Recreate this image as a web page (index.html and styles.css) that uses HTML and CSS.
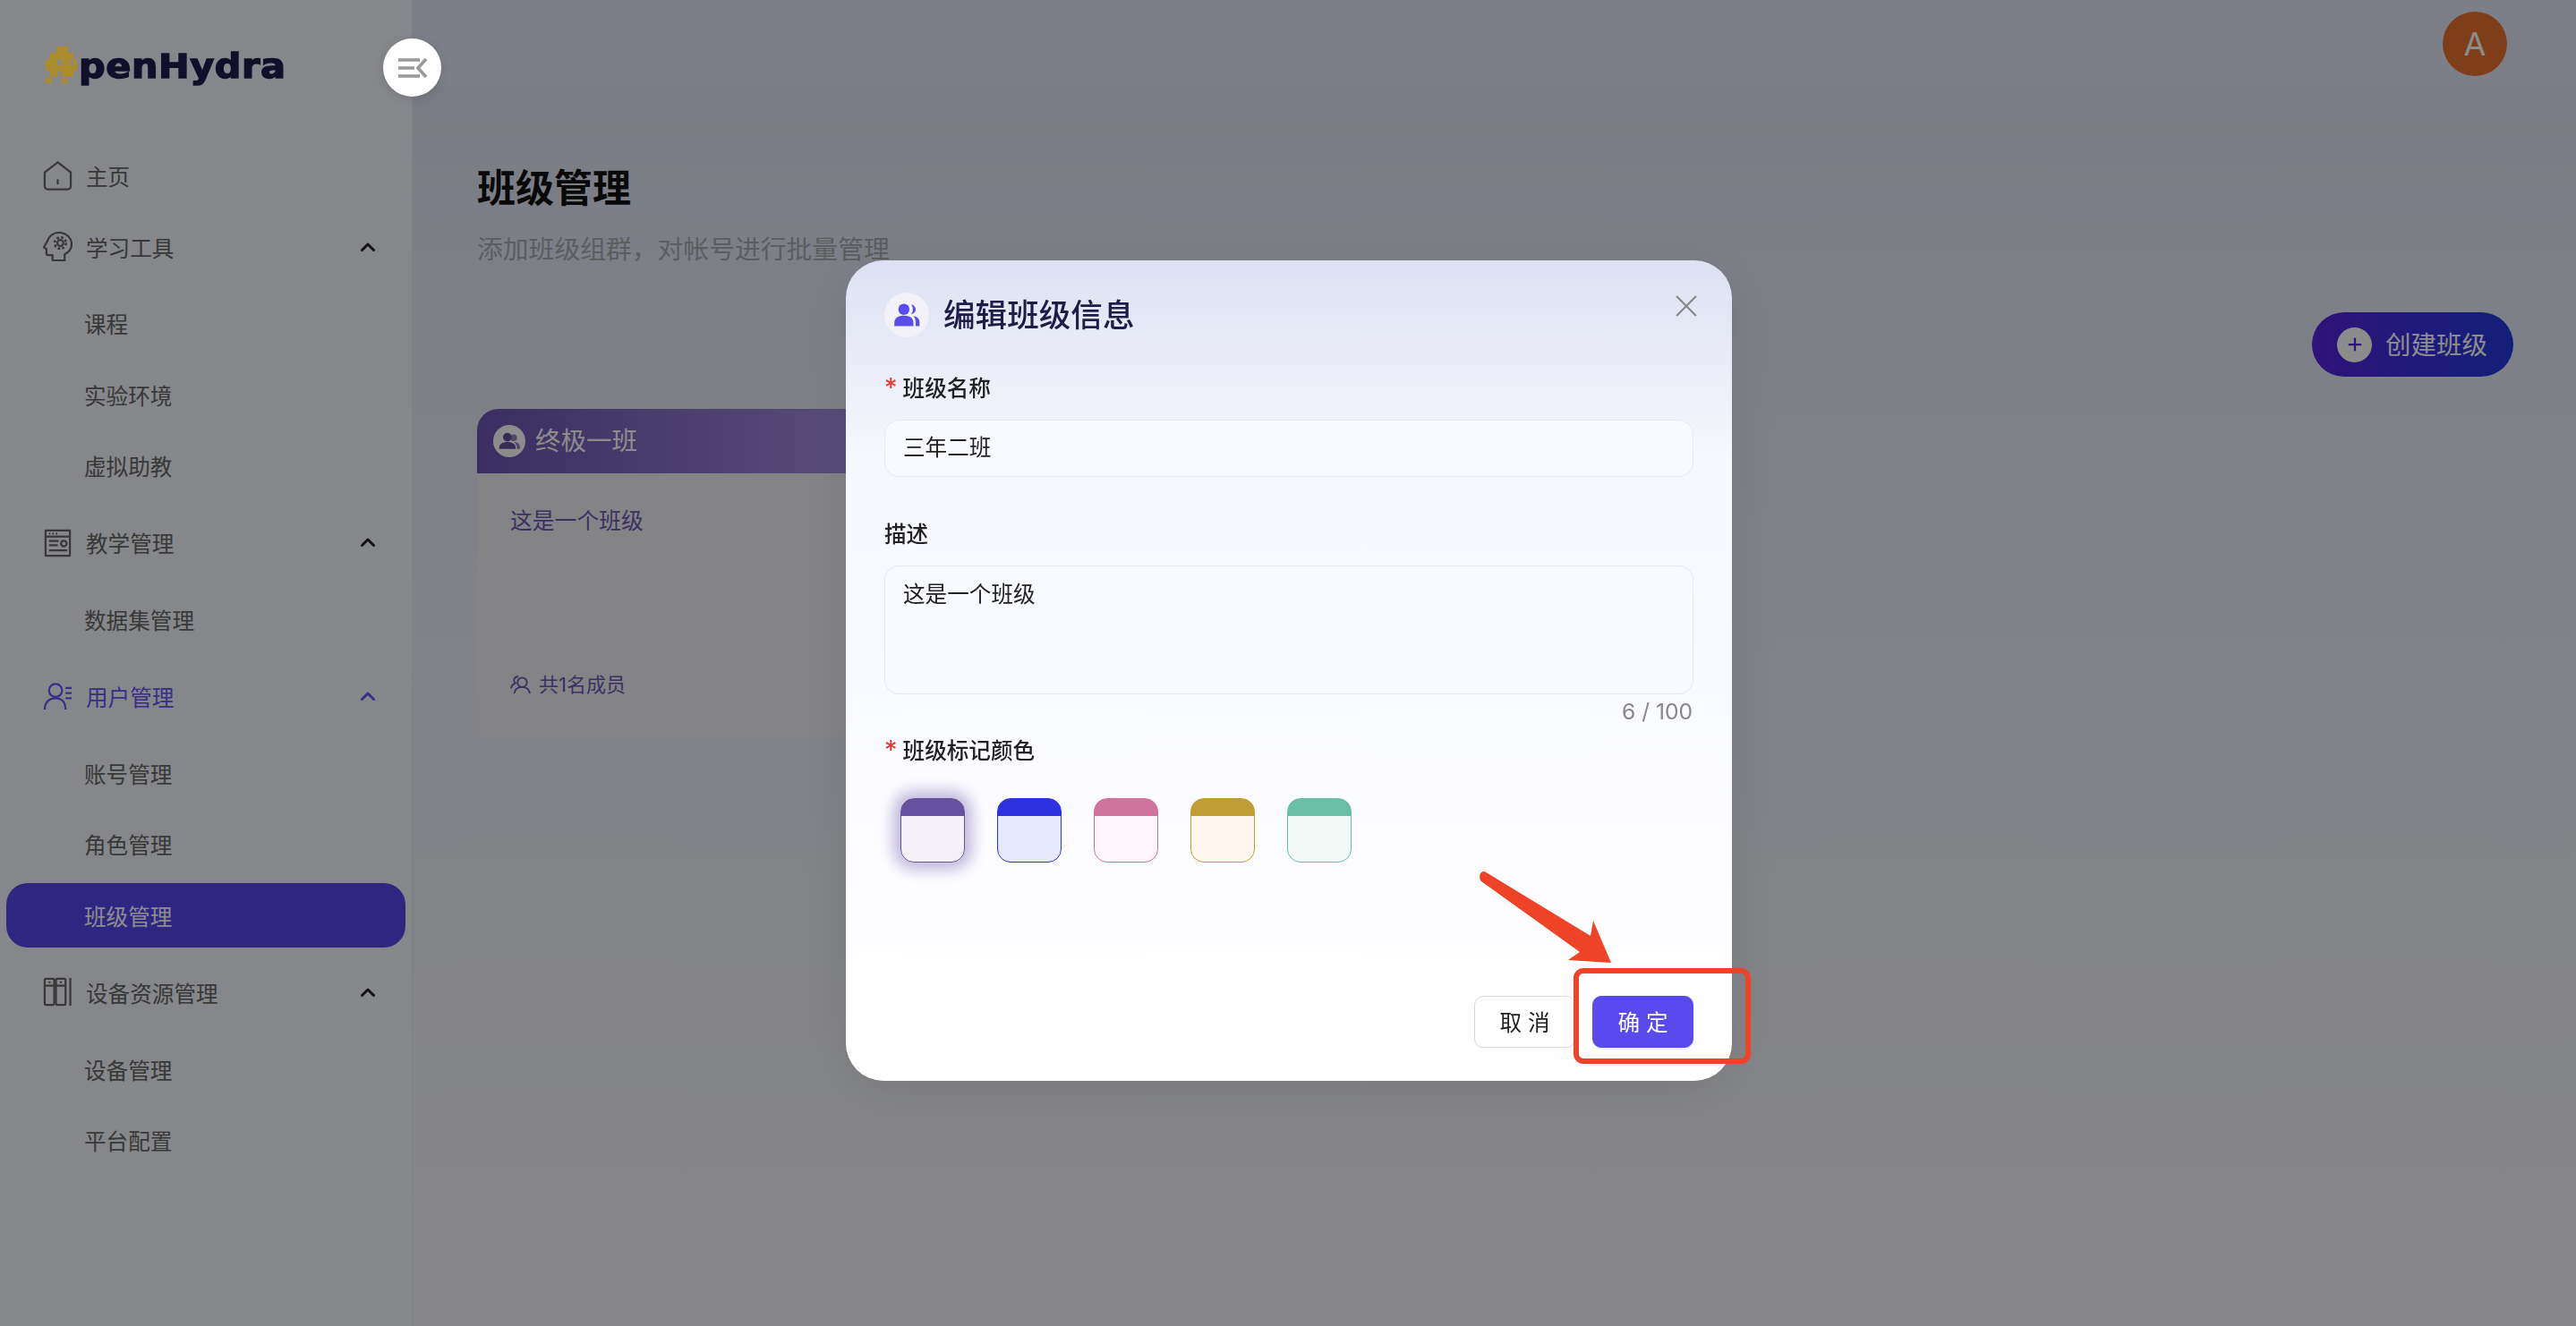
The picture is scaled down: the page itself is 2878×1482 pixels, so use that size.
FILE: index.html
```html
<!DOCTYPE html>
<html lang="zh-CN">
<head>
	<meta charset="UTF-8" />
	<meta name="viewport" content="width=device-width, initial-scale=1" />
	<title>班级管理 - OpenHydra</title>
	<link rel="stylesheet" href="styles.css">
</head>
<body>

<div class="layout">
	<aside class="sidebar">
		<div class="logo-space"></div>
		<nav class="menu">
			<a class="row" href="#">
				<svg class="row-icon" viewBox="0 0 34 34"><path d="M17 1.500 32 13v16a3.500 3.500 0 0 1-3.500 3.500h-23A3.500 3.500 0 0 1 2 29V13Z" /><path d="M17 21v6" /></svg>
				<span>主页</span>
			</a>
			<a class="row" href="#">
				<svg class="row-icon" viewBox="0 0 34 34"><path d="M11 33v-6H6a2 2 0 0 1-2-2v-5l-3-2 4-7C6.500 5 12 1 18.500 1 26.500 1 33 7 33 14.500c0 5.500-3 9-8 11.500v7Z" /><circle cx="20" cy="13" r="3.500" /><circle cx="20" cy="13" r="6.500" stroke-width="2.600" stroke-dasharray="2.800 2.300" /></svg>
				<span>学习工具</span>
				<svg class="chevron" viewBox="0 0 16 10"><path d="M1.500 8.500 8 2l6.500 6.500" /></svg>
			</a>
			<div class="sub">
				<a class="row sub-row" href="#">课程</a>
				<a class="row sub-row" href="#">实验环境</a>
				<a class="row sub-row" href="#">虚拟助教</a>
			</div>
			<a class="row" href="#">
				<svg class="row-icon" viewBox="0 0 34 34"><path d="M31 31V3H3v29h29" /><path d="M3 10h28" /><path d="M7 6.500h1.500M11 6.500h1.500M15 6.500h1.500" /><path d="M7 15h11M7 20h10M7 26h21" /><circle cx="24" cy="18" r="3.200" /></svg>
				<span>教学管理</span>
				<svg class="chevron" viewBox="0 0 16 10"><path d="M1.500 8.500 8 2l6.500 6.500" /></svg>
			</a>
			<div class="sub">
				<a class="row sub-row" href="#">数据集管理</a>
			</div>
			<a class="row current" href="#">
				<svg class="row-icon" viewBox="0 0 34 34"><circle cx="14.500" cy="10" r="7.500" /><path d="M2 32c0-8 5-13 12.500-13S26 24 26 32" /><path d="M26 7h7M26 13h7M26 19h7" /></svg>
				<span>用户管理</span>
				<svg class="chevron" viewBox="0 0 16 10"><path d="M1.500 8.500 8 2l6.500 6.500" /></svg>
			</a>
			<div class="sub">
				<a class="row sub-row" href="#">账号管理</a>
				<a class="row sub-row" href="#">角色管理</a>
				<a class="row sub-row active" href="#">班级管理</a>
			</div>
			<a class="row" href="#">
				<svg class="row-icon" viewBox="0 0 34 34"><rect x="2" y="2" width="11" height="30" rx="1.500" /><rect x="15" y="2" width="11" height="30" rx="1.500" /><path d="M2 10h11M15 10h11M31.500 1v32" /><path d="M7.500 5v2M20.500 5v2" /></svg>
				<span>设备资源管理</span>
				<svg class="chevron" viewBox="0 0 16 10"><path d="M1.500 8.500 8 2l6.500 6.500" /></svg>
			</a>
			<div class="sub">
				<a class="row sub-row" href="#">设备管理</a>
				<a class="row sub-row" href="#">平台配置</a>
			</div>
		</nav>
	</aside>

	<div class="main">
		<header class="topbar">
			<div class="avatar">A</div>
		</header>
		<main class="content">
			<h2 class="page-title">班级管理</h2>
			<p class="page-desc">添加班级组群，对帐号进行批量管理</p>
			<div class="toolbar">
				<button class="create-btn">
					<span class="plus"><svg viewBox="0 0 20 20"><path d="M10 2v16M2 10h16" /></svg></span>
					<span class="create-text">创建班级</span>
				</button>
			</div>
			<section class="class-card">
				<div class="class-head">
					<span class="class-badge">
						<svg viewBox="0 0 24 24"><circle cx="10" cy="8" r="4.500" /><circle cx="16.500" cy="8.500" r="3.500" opacity=".7" /><path d="M1.500 19c0-4 3.500-6 8.500-6s8.500 2 8.500 6v1h-17Z" /><path d="M17 13c3.500 0 6 2 6 5.500V20h-3c0-3-1-5-3-7Z" opacity=".7" /></svg>
					</span>
					<span class="class-name">终极一班</span>
				</div>
				<div class="class-body">
					<p class="class-text">这是一个班级</p>
					<div class="class-foot">
						<svg viewBox="0 0 24 24"><circle cx="14" cy="9" r="5.500" /><path d="M4.500 22c1-5 4.500-7.500 9.500-7.500s8 2.500 9 7.500" /><path d="M9.500 2.500C6.500 2 4.500 4 4.500 6.500c0 1.500.5 2.500 1.500 3.500-2.500 1-4.500 3-5 6" /></svg>
						共1名成员
					</div>
				</div>
			</section>
		</main>
	</div>
</div>

<div class="mask">
	<div class="dialog">
		<div class="dialog-head">
			<span class="dialog-badge">
				<svg viewBox="0 0 24 24"><circle cx="9.500" cy="7" r="5" /><path d="M16 2.500c2.500.5 4 2.300 4 4.500s-1.500 4-4 4.500c1-1.300 1.500-2.800 1.500-4.500S17 3.800 16 2.500Z" /><path d="M1 22v-3c0-4.500 3.500-6.500 8.500-6.500S18 14.500 18 19v3Z" /><path d="M18 13c3.500.5 5.500 2.500 5.500 6v3H20v-3c0-2.500-.5-4.500-2-6Z" /></svg>
			</span>
			<h3>编辑班级信息</h3>
			<svg class="dialog-close" viewBox="0 0 22 22"><path d="M1 1l20 20M21 1 1 21" /></svg>
		</div>

		<label class="field-label required">班级名称</label>
		<div class="input">三年二班</div>

		<label class="field-label desc-label">描述</label>
		<div class="input textarea">这是一个班级</div>
		<div class="count">6 / 100</div>

		<label class="field-label required color-label">班级标记颜色</label>
		<div class="swatches">
			<span class="swatch purple selected"></span>
			<span class="swatch blue"></span>
			<span class="swatch pink"></span>
			<span class="swatch gold"></span>
			<span class="swatch green"></span>
		</div>

		<div class="dialog-foot">
			<button class="btn">取 消</button>
			<button class="btn primary">确 定</button>
		</div>
	</div>
</div>

<!-- these sit on top of the mask -->
<div class="logo">
	<svg class="logo-mark" viewBox="0 0 35 41">
		<rect x="12" y="0" width="13" height="7" />
		<rect x="5" y="7" width="26" height="7" />
		<rect x="0" y="14" width="13" height="7" />
		<rect x="18" y="14" width="10" height="7" />
		<rect x="31" y="14" width="4" height="7" />
		<rect x="0" y="21" width="35" height="6" />
		<rect x="5" y="27" width="8" height="7" />
		<rect x="18" y="27" width="13" height="7" />
		<rect x="0" y="35" width="7" height="6" />
		<rect x="18" y="35" width="6" height="6" />
	</svg>
	<span class="logo-text">penHydra</span>
</div>
<button class="toggle">
	<svg viewBox="0 0 34 24"><path d="M1 3h24M1 12h18M1 21h24" /><path d="M32 2 23 12l9 10" /></svg>
</button>

<div class="note">
	<svg class="note-arrow" viewBox="0 0 160 120"><path d="M7.500 1.500 125 73l3-17 20 47-48-3 13-9L3 12C-1 8 2-1 7.500 1.500Z" /></svg>
	<div class="note-box"></div>
</div>

</body>
</html>
```

FILE: styles.css
```css
* {
	box-sizing: border-box;
}

html,
body {
	margin: 0;
	height: 100%;
	overflow: hidden;
}

body {
	font-family: Inter, 'Noto Sans CJK SC', sans-serif;
	font-size: 24.6px;
	color: #222;
}

a {
	color: inherit;
	text-decoration: none;
}

button {
	font: inherit;
	cursor: pointer;
}

.layout {
	display: flex;
	height: 1482px;
}

/* sidebar */
.sidebar {
	width: 461px;
	flex: none;
	background: #f4f6fc;
	border-right: 1px solid #e8eaf0;
}

.logo-space {
	height: 160px;
}

.menu {
	display: flex;
	flex-direction: column;
	gap: 7.500px;
	padding: 0 7px;
}

.row {
	display: flex;
	align-items: center;
	height: 72px;
	padding: 0 34px 0 41px;
	color: #666;
	border-radius: 24px;
}

.row span {
	margin-left: 15px;
}

.row-icon {
	width: 33px;
	height: 33px;
	flex: none;
	fill: none;
	stroke: #666;
	stroke-width: 2.300;
	stroke-linejoin: round;
}

.chevron {
	width: 16px;
	height: 10px;
	margin-left: auto;
	fill: none;
	stroke: #222;
	stroke-width: 3;
	stroke-linecap: round;
	stroke-linejoin: round;
}

.sub {
	display: flex;
	flex-direction: column;
	gap: 7.500px;
	margin: 6.400px 0;
}

.sub-row {
	padding-left: 87px;
}

.row.current,
.row.current span {
	color: #6a53f5;
}

.current .row-icon,
.current .chevron {
	stroke: #6a53f5;
}

.row.active {
	background: #5546ec;
	color: #fff;
}

/* main area */
.main {
	flex: 1;
	min-width: 0;
	display: flex;
	flex-direction: column;
	background: linear-gradient(180deg, #d9deec 0%, #e4e9f6 20%, #f5f5f8 100%);
}

.topbar {
	height: 97px;
	flex: none;
	display: flex;
	justify-content: flex-end;
	align-items: center;
	padding-right: 77px;
	background: #e3e8f7;
}

.avatar {
	width: 72px;
	height: 72px;
	border-radius: 50%;
	background: #e3722f;
	color: #fff;
	font-size: 36px;
	display: flex;
	align-items: center;
	justify-content: center;
}

.content {
	flex: 1;
	padding: 84px 70px 0 72px;
}

.page-title {
	margin: 0;
	font-size: 43px;
	line-height: 58px;
	font-weight: 700;
	color: #111;
}

.page-desc {
	margin: 20px 0 0;
	font-size: 28.800px;
	line-height: 40px;
	color: #a8a9ae;
}

.toolbar {
	display: flex;
	justify-content: flex-end;
	margin-top: 50px;
}

.create-btn {
	display: flex;
	align-items: center;
	gap: 15px;
	width: 225px;
	height: 72px;
	padding: 0 0 0 28px;
	border: 0;
	border-radius: 36px;
	background: linear-gradient(90deg, #5523dc, #233adc);
	color: #fff;
	font-size: 28.500px;
}

.create-text {
	padding-bottom: 3px;
}

.plus {
	width: 39px;
	height: 39px;
	border-radius: 50%;
	background: #fff;
	display: flex;
	align-items: center;
	justify-content: center;
}

.plus svg {
	width: 18px;
	height: 18px;
	fill: none;
	stroke: #5523dc;
	stroke-width: 2.500;
}

.class-card {
	width: 710px;
	margin-top: 36px;
	border-radius: 24px 24px 0 0;
	background: #f1f1f5;
}

.class-head {
	display: flex;
	align-items: center;
	gap: 11px;
	height: 72px;
	padding-left: 18px;
	border-radius: 24px 24px 0 0;
	background: linear-gradient(90deg, #6b54b2, #a38ce1 60%);
	color: #fff;
	font-size: 28.500px;
}

.class-name {
	padding-bottom: 5px;
}

.class-badge {
	width: 36px;
	height: 36px;
	border-radius: 50%;
	background: #fff;
	display: flex;
	align-items: center;
	justify-content: center;
}

.class-badge svg {
	width: 26px;
	height: 26px;
	fill: #65519e;
}

.class-body {
	height: 294px;
	padding: 35px 37px 0;
	color: #6a5ab0;
}

.class-text {
	margin: 0;
	font-size: 24.800px;
	line-height: 36px;
}

.class-foot {
	display: flex;
	align-items: center;
	gap: 9px;
	margin-top: 149px;
	font-size: 22px;
	line-height: 32px;
}

.class-foot svg {
	width: 23px;
	height: 23px;
	fill: none;
	stroke: #6a5ab0;
	stroke-width: 2;
}

/* dialog */
.mask {
	position: fixed;
	inset: 0;
	z-index: 10;
	display: flex;
	justify-content: center;
	padding: 291px 0 0 2px;
	background: rgba(0, 0, 0, 0.45);
}

.dialog {
	width: 990px;
	height: 917px;
	padding: 36px 43px 0;
	border-radius: 42px;
	background: linear-gradient(180deg, #dde1f2 0%, #f6f8fd 24%, #f9faff 50%, #fff 100%);
	box-shadow: 0 10px 60px rgba(0, 0, 0, 0.1);
}

.dialog-head {
	display: flex;
	align-items: center;
	gap: 16px;
	height: 50px;
}

.dialog-head h3 {
	margin: 0 0 6px;
	font-size: 35.600px;
	font-weight: 500;
	color: #1f1c47;
}

.dialog-badge {
	width: 50px;
	height: 50px;
	border-radius: 50%;
	background: #f4f2f9;
	display: flex;
	align-items: center;
	justify-content: center;
}

.dialog-badge svg {
	width: 30px;
	height: 30px;
	fill: #5b4cf0;
}

.dialog-close {
	width: 24px;
	height: 24px;
	margin: -20px -4px 0 auto;
	fill: none;
	stroke: #888;
	stroke-width: 2;
}

.field-label {
	display: block;
	margin-top: 39px;
	line-height: 36px;
	font-weight: 500;
	color: #222;
}

.required::before {
	content: "*";
	margin-right: 6px;
	font-size: 29px;
	line-height: 20px;
	font-weight: 400;
	color: #e5382e;
}

.input {
	margin-top: 17px;
	height: 64px;
	padding: 0 20px;
	line-height: 60px;
	border: 1px solid #e8e9f0;
	border-radius: 16px;
	background: #f9faff;
	color: #222;
}

.desc-label {
	margin-top: 46px;
}

.textarea {
	height: 144px;
	line-height: 62px;
}

.count {
	text-align: right;
	padding-right: 1px;
	line-height: 38px;
	color: #888;
}

.color-label {
	margin-top: 7px;
}

.swatches {
	display: flex;
	gap: 36px;
	margin-top: 35px;
	padding-left: 18px;
}

.swatch {
	width: 72px;
	height: 72px;
	border-radius: 15px;
	border: 1.500px solid var(--main);
	background: linear-gradient(180deg, var(--main) 19px, var(--soft) 19px);
}

.purple {
	--main: #65519e;
	--soft: #f4f1f8;
}

.blue {
	--main: #2c32e0;
	--soft: #e6eafc;
}

.pink {
	--main: #d0749d;
	--soft: #fff5fb;
}

.gold {
	--main: #c09e33;
	--soft: #fff6ef;
}

.green {
	--main: #69bea3;
	--soft: #f3f9f6;
}

.selected {
	box-shadow: 0 0 16px 8px #c0b8da;
}

.dialog-foot {
	display: flex;
	justify-content: flex-end;
	gap: 19px;
	margin-top: 149px;
}

.btn {
	width: 113px;
	height: 58px;
	padding: 0 0 3px;
	border: 1px solid #d9d9d9;
	border-radius: 10px;
	background: #fff;
	color: #222;
	box-shadow: 0 2px 0 rgba(0, 0, 0, 0.02);
}

.btn.primary {
	border-color: #5a4aee;
	background: #5a4aee;
	color: #fff;
	box-shadow: 0 2px 0 rgba(90, 74, 238, 0.1);
}

/* above the mask */
.logo {
	position: fixed;
	left: 51px;
	top: 52px;
	z-index: 20;
	display: flex;
	height: 46px;
}

.logo-mark {
	width: 35px;
	height: 41px;
	fill: #ab8c2c;
}

.logo-text {
	margin-left: 2px;
	font-family: 'DejaVu Sans', sans-serif;
	font-weight: 700;
	font-size: 37px;
	line-height: 46px;
	letter-spacing: 0.500px;
	color: #11102a;
	-webkit-text-stroke: 1.400px #11102a;
	transform: scaleX(1.12);
	transform-origin: left center;
}

.toggle {
	position: fixed;
	left: 428px;
	top: 43px;
	z-index: 20;
	width: 65px;
	height: 65px;
	padding: 0;
	border: 0;
	border-radius: 50%;
	background: #fff;
	box-shadow: 0 2px 12px rgba(0, 0, 0, 0.15);
	display: flex;
	align-items: center;
	justify-content: center;
}

.toggle svg {
	width: 34px;
	height: 24px;
	fill: none;
	stroke: #999;
	stroke-width: 3.500;
}

.note {
	position: fixed;
	inset: 0;
	z-index: 30;
	pointer-events: none;
}

.note-arrow {
	position: absolute;
	left: 1652px;
	top: 973px;
	width: 160px;
	height: 120px;
	fill: #ee4326;
}

.note-box {
	position: absolute;
	left: 1758px;
	top: 1082px;
	width: 198px;
	height: 107px;
	border: 6px solid #ee4326;
	border-radius: 11px;
}
```
